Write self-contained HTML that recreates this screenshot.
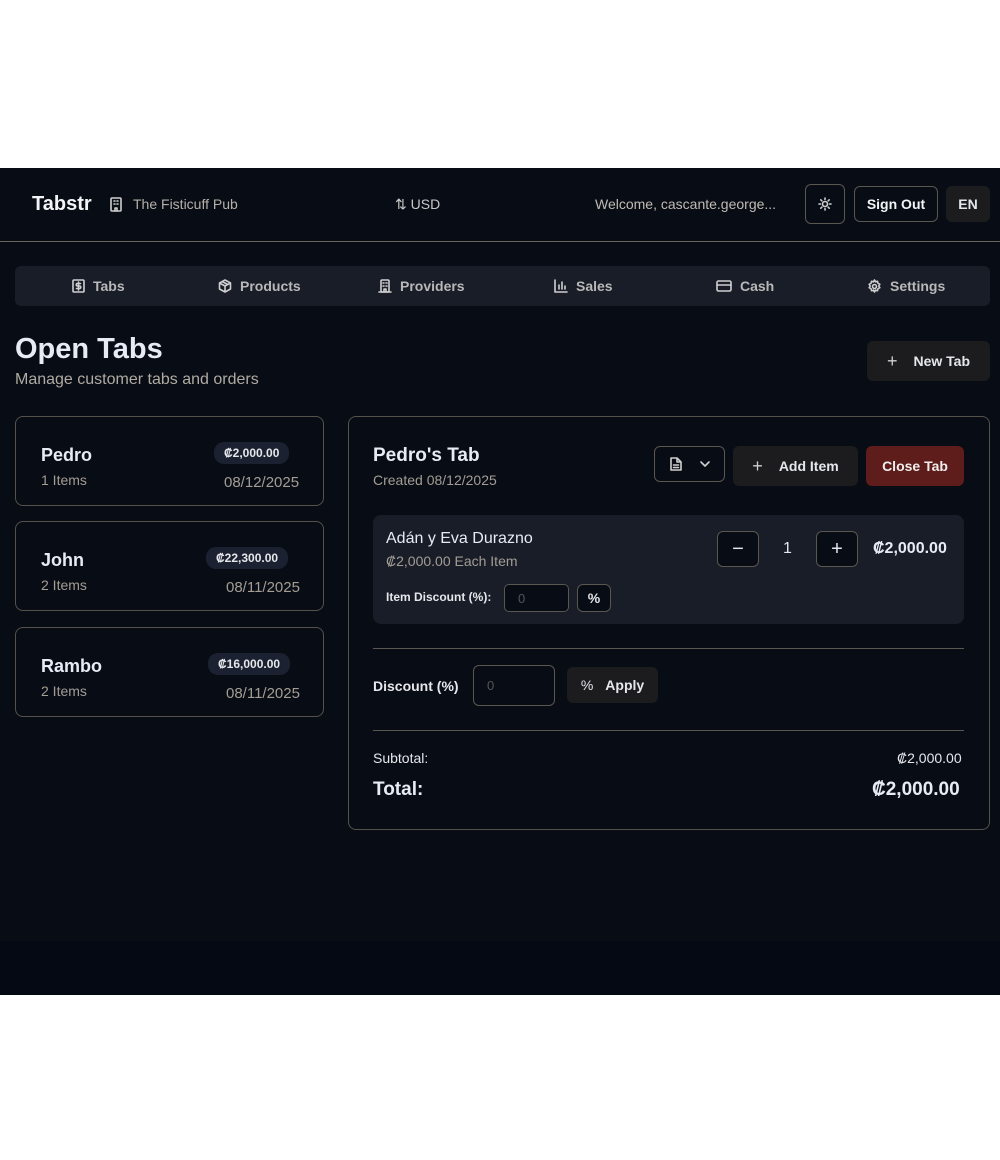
<!DOCTYPE html>
<html><head><meta charset="utf-8"><style>
*{box-sizing:border-box;margin:0;padding:0}
body{width:1000px;height:1160px;background:#fff;font-family:"Liberation Sans",sans-serif;position:relative;overflow:hidden;color:#e5e7eb}
.a{position:absolute}
.app{position:absolute;left:0;top:168px;width:1000px;height:827px;background:#080c15}
.foot{position:absolute;left:0;top:941px;width:1000px;height:54px;background:#050913}
.btn{position:absolute;border-radius:6px;display:flex;align-items:center;justify-content:center;font-size:14px;font-weight:bold}
.ol{border:1px solid #5a5650;background:#080c15}
.card{position:absolute;border:1px solid #55524c;border-radius:8px;background:#080c15}
.muted{color:#a39d94}
.pill{position:absolute;background:#1b2130;border-radius:10px;font-size:12px;font-weight:bold;padding:4px 10px;color:#e5e7eb}
svg{stroke:#cfcfcf;fill:none;stroke-width:1.6;stroke-linecap:round;stroke-linejoin:round}
.nav span{position:absolute;top:278px;font-size:14px;font-weight:bold;color:#b8b8b8;display:flex;align-items:center;gap:8px}
</style></head><body>
<div class="app"></div>
<div class="foot"></div>
<!-- header -->
<div class="a" style="left:32px;top:193px;font-size:20px;font-weight:bold;color:#f3f4f6">Tabstr</div>
<svg class="a" style="left:110px;top:197px" width="12" height="15" viewBox="0 0 12 15"><rect x="1" y="1" width="10" height="13" rx="1"/><path d="M4 4h1M7 4h1M4 7h1M7 7h1M5 14v-3h2v3"/></svg>
<div class="a muted" style="left:133px;top:196px;font-size:14px;color:#b5b0a8">The Fisticuff Pub</div>
<div class="a" style="left:395px;top:196px;font-size:14px;color:#c8c8c8">⇅ USD</div>
<div class="a" style="left:595px;top:196px;font-size:14px;color:#c0bbb3">Welcome, cascante.george...</div>
<div class="btn ol" style="left:805px;top:184px;width:40px;height:40px"><svg width="14" height="14" viewBox="0 0 14 14"><circle cx="7" cy="7" r="2.5"/><path d="M7 1v1.5M7 11.5V13M1 7h1.5M11.5 7H13M2.8 2.8l1 1M10.2 10.2l1 1M2.8 11.2l1-1M10.2 3.8l1-1"/></svg></div>
<div class="btn ol" style="left:854px;top:186px;width:84px;height:36px;color:#f3f4f6">Sign Out</div>
<div class="btn" style="left:946px;top:186px;width:44px;height:36px;background:#1c1c1e;color:#e5e7eb">EN</div>
<div class="a" style="left:0;top:241px;width:1000px;height:1px;background:#6b655c"></div>
<!-- nav -->
<div class="a" style="left:15px;top:266px;width:975px;height:40px;background:#181d28;border-radius:6px"></div>
<div class="nav">
<span style="left:72px"><svg width="13" height="14" viewBox="0 0 13 14"><rect x="1" y="1" width="11" height="12" rx="1"/><path d="M6.5 3v8M8.5 4.5H5.5a1.2 1.2 0 000 2.5h2a1.2 1.2 0 010 2.5H4.5"/></svg>Tabs</span>
<span style="left:218px"><svg width="14" height="14" viewBox="0 0 14 14"><path d="M7 1l5.5 3v6L7 13 1.5 10V4z M1.5 4L7 7l5.5-3M7 7v6M4.2 2.5l5.5 3"/></svg>Products</span>
<span style="left:378px"><svg width="14" height="14" viewBox="0 0 14 14"><rect x="3" y="1" width="8" height="12" rx="1"/><path d="M1 13h12M5 4h1M8 4h1M5 7h1M8 7h1M6 13v-3h2v3"/></svg>Providers</span>
<span style="left:554px"><svg width="14" height="14" viewBox="0 0 14 14"><path d="M1 1v12h12M5 10V6M8 10V3M11 10V7"/></svg>Sales</span>
<span style="left:716px"><svg width="16" height="14" viewBox="0 0 16 14"><rect x="1" y="2" width="14" height="10" rx="1.5"/><path d="M1 6h14"/></svg>Cash</span>
<span style="left:867px"><svg width="15" height="15" viewBox="0 0 15 15"><circle cx="7.5" cy="7.5" r="2"/><path d="M7.5 1l1 1.8 2-.5.5 2 1.8 1-1 1.7 1 1.7-1.8 1-.5 2-2-.5-1 1.8-1-1.8-2 .5-.5-2-1.8-1 1-1.7-1-1.7 1.8-1 .5-2 2 .5z"/></svg>Settings</span>
</div>
<!-- title -->
<div class="a" style="left:15px;top:333px;font-size:29px;font-weight:bold;color:#e6ebf5">Open Tabs</div>
<div class="a" style="left:15px;top:371px;font-size:16px;color:#b0aba2">Manage customer tabs and orders</div>
<div class="btn" style="left:867px;top:341px;width:123px;height:40px;background:#1c1c1e;color:#e5e7eb;font-weight:bold"><span style="font-weight:normal;font-size:18px;margin-right:16px;color:#cfcfcf">+</span>New Tab</div>
<!-- left cards -->
<div class="card" style="left:15px;top:416px;width:309px;height:90px"></div>
<div class="a" style="left:41px;top:445px;font-size:18px;font-weight:bold;color:#e6ebf5">Pedro</div>
<div class="a muted" style="left:41px;top:472px;font-size:14px">1 Items</div>
<div class="pill" style="left:214px;top:442px">₡2,000.00</div>
<div class="a muted" style="left:224px;top:474px;font-size:15px">08/12/2025</div>

<div class="card" style="left:15px;top:521px;width:309px;height:90px"></div>
<div class="a" style="left:41px;top:550px;font-size:18px;font-weight:bold;color:#e6ebf5">John</div>
<div class="a muted" style="left:41px;top:577px;font-size:14px">2 Items</div>
<div class="pill" style="left:206px;top:547px">₡22,300.00</div>
<div class="a muted" style="left:226px;top:579px;font-size:15px">08/11/2025</div>

<div class="card" style="left:15px;top:627px;width:309px;height:90px"></div>
<div class="a" style="left:41px;top:656px;font-size:18px;font-weight:bold;color:#e6ebf5">Rambo</div>
<div class="a muted" style="left:41px;top:683px;font-size:14px">2 Items</div>
<div class="pill" style="left:208px;top:653px">₡16,000.00</div>
<div class="a muted" style="left:226px;top:685px;font-size:15px">08/11/2025</div>
<!-- right panel -->
<div class="card" style="left:348px;top:416px;width:642px;height:414px"></div>
<div class="a" style="left:373px;top:445px;font-size:19px;font-weight:bold;color:#e6ebf5">Pedro's Tab</div>
<div class="a muted" style="left:373px;top:472px;font-size:14px">Created 08/12/2025</div>
<div class="btn ol" style="left:654px;top:446px;width:71px;height:36px;gap:18px"><svg width="12" height="14" viewBox="0 0 12 14"><path d="M1 1h6l4 4v8H1zM7 1v4h4M3.5 8h5M3.5 10.5h5"/></svg><svg width="10" height="6" viewBox="0 0 10 6"><path d="M1 1l4 4 4-4"/></svg></div>
<div class="btn" style="left:733px;top:446px;width:125px;height:40px;background:#1c1c1e;color:#e5e7eb"><span style="font-weight:normal;font-size:18px;margin-right:16px;color:#cfcfcf">+</span>Add Item</div>
<div class="btn" style="left:866px;top:446px;width:98px;height:40px;background:#5e1c1a;color:#eee">Close Tab</div>
<!-- item -->
<div class="a" style="left:373px;top:515px;width:591px;height:109px;background:#181d28;border-radius:8px"></div>
<div class="a" style="left:386px;top:530px;font-size:16px;color:#e6ebf5">Adán y Eva Durazno</div>
<div class="a muted" style="left:386px;top:553px;font-size:14px">₡2,000.00 Each Item</div>
<div class="a" style="left:386px;top:590px;font-size:12px;font-weight:bold;color:#e5e7eb">Item Discount (%):</div>
<div class="a ol" style="left:504px;top:584px;width:65px;height:28px;border-radius:5px;font-size:13px;color:#555;padding:6px 13px">0</div>
<div class="btn ol" style="left:577px;top:584px;width:34px;height:28px;font-size:14px">%</div>
<div class="btn ol" style="left:717px;top:531px;width:42px;height:36px;font-size:20px;font-weight:normal">−</div>
<div class="a" style="left:783px;top:540px;font-size:16px">1</div>
<div class="btn ol" style="left:816px;top:531px;width:42px;height:36px;font-size:20px;font-weight:normal">+</div>
<div class="a" style="left:873px;top:540px;font-size:16px;font-weight:bold;color:#e6ebf5">₡2,000.00</div>
<div class="a" style="left:373px;top:648px;width:591px;height:1px;background:#5a5650"></div>
<div class="a" style="left:373px;top:678px;font-size:14px;font-weight:bold;color:#e5e7eb">Discount (%)</div>
<div class="a ol" style="left:473px;top:665px;width:82px;height:41px;border-radius:6px;font-size:13px;color:#555;padding:12px 13px">0</div>
<div class="btn" style="left:567px;top:667px;width:91px;height:36px;background:#1c1c1e;color:#e5e7eb"><span style="margin-right:12px;font-weight:normal">%</span>Apply</div>
<div class="a" style="left:373px;top:730px;width:591px;height:1px;background:#5a5650"></div>
<div class="a" style="left:373px;top:750px;font-size:14px;color:#e5e7eb">Subtotal:</div>
<div class="a" style="left:897px;top:750px;font-size:14px;color:#e5e7eb">₡2,000.00</div>
<div class="a" style="left:373px;top:779px;font-size:19px;font-weight:bold;color:#e6ebf5">Total:</div>
<div class="a" style="left:872px;top:779px;font-size:19px;font-weight:bold;color:#e6ebf5">₡2,000.00</div>
</body></html>
